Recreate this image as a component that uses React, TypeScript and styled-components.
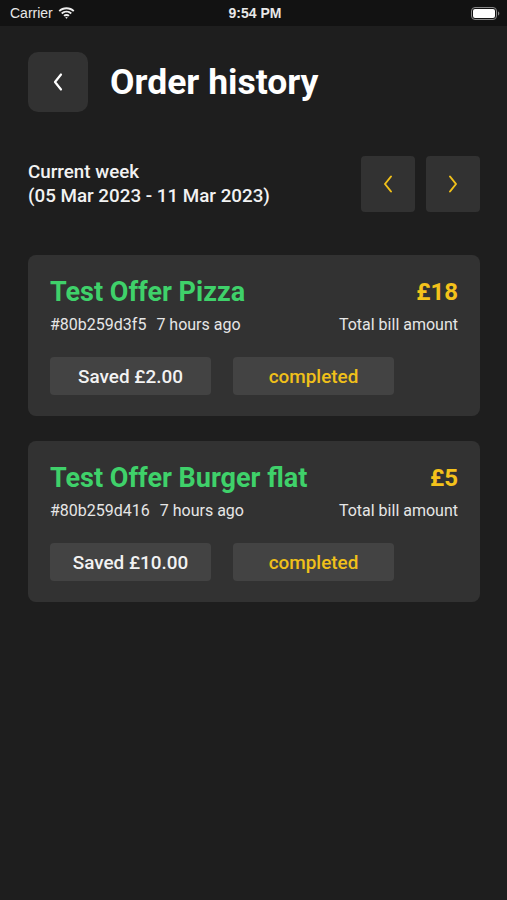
import React from 'react';
import styled, { createGlobalStyle } from 'styled-components';

const GlobalStyle = createGlobalStyle`
    html, body {
        margin: 0;
        padding: 0;
        background: #1e1e1e;
        font-family: Roboto, "Liberation Sans", sans-serif;
        color: #fff;
    }
`;

const Screen = styled.div`
    width: 507px;
    min-height: 900px;
    background: #1e1e1e;
    display: flex;
    flex-direction: column;
`;

const StatusBar = styled.div`
    height: 26px;
    background: #121212;
    display: grid;
    grid-template-columns: 1fr auto 1fr;
    align-items: center;
    padding: 0 7px 0 10px;
    font-family: "Liberation Sans", Arial, sans-serif;
    font-size: 14px;
    color: #e8e8e8;

    .left {
        display: flex;
        align-items: center;
        gap: 5px;
    }

    .time {
        font-weight: 600;
    }

    .right {
        display: flex;
        justify-content: flex-end;
    }
`;

const Content = styled.div`
    padding: 26px 27px 0 28px;
    display: flex;
    flex-direction: column;
`;

const Header = styled.div`
    display: flex;
    align-items: center;
    gap: 22px;
`;

const IconButton = styled.button<{ size: number; h?: number; radius?: number }>`
    width: ${(p) => p.size}px;
    height: ${(p) => p.h ?? p.size}px;
    border-radius: ${(p) => p.radius ?? 10}px;
    background: #323232;
    border: none;
    padding: 0;
    display: flex;
    align-items: center;
    justify-content: center;
    cursor: pointer;
`;

const Title = styled.h1`
    margin: 0;
    font-size: 35.5px;
    font-weight: 700;
    color: #fff;
`;

const WeekRow = styled.div`
    margin-top: 44px;
    display: flex;
    align-items: center;
    justify-content: space-between;
`;

const WeekText = styled.div`
    font-size: 18.8px;
    line-height: 24px;
    font-weight: 500;
    color: #f2f2f2;
`;

const NavGroup = styled.div`
    display: flex;
    gap: 11px;
`;

const CardList = styled.div`
    margin-top: 43px;
    display: flex;
    flex-direction: column;
    gap: 25px;
`;

const Card = styled.div`
    background: #323232;
    border-radius: 8px;
    padding: 22px 22px 21px;
    display: flex;
    flex-direction: column;
`;

const Row = styled.div`
    display: flex;
    align-items: center;
    justify-content: space-between;
`;

const OfferName = styled.div`
    font-size: 27px;
    line-height: 30px;
    font-weight: 700;
    color: #3fd16a;
`;

const Price = styled.div`
    font-size: 24px;
    line-height: 28px;
    font-weight: 700;
    color: #f4c21b;
`;

const Meta = styled(Row)`
    margin-top: 8px;
    font-size: 16px;
    line-height: 20px;
    color: #e6e6e6;

    span + span {
        margin-left: 10px;
    }
`;

const Actions = styled.div`
    margin-top: 22px;
    display: flex;
    gap: 22px;
`;

const Pill = styled.div<{ $accent?: boolean }>`
    width: 161px;
    height: 38px;
    border-radius: 4px;
    background: #434343;
    display: flex;
    align-items: center;
    justify-content: center;
    font-size: 18.9px;
    font-weight: 500;
    color: ${(p) => (p.$accent ? '#f0c01a' : '#f2f2f2')};
`;

const Chevron = ({ dir, color, w = 2 }: { dir: 'left' | 'right'; color: string; w?: number }) => (
    <svg width="12" height="20" viewBox="0 0 12 20" fill="none">
        <path
            d={dir === 'left' ? 'M9 2.5 L3 10 L9 17.5' : 'M3 2.5 L9 10 L3 17.5'}
            stroke={color}
            strokeWidth={w}
            strokeLinecap="round"
            strokeLinejoin="round"
        />
    </svg>
);

const orders = [
    { name: 'Test Offer Pizza', price: '£18', id: '#80b259d3f5', when: '7 hours ago', saved: 'Saved £2.00' },
    { name: 'Test Offer Burger flat', price: '£5', id: '#80b259d416', when: '7 hours ago', saved: 'Saved £10.00' },
];

export default function App() {
    return (
        <Screen>
            <GlobalStyle />
            <StatusBar>
                <div className="left">
                    <span>Carrier</span>
                    <svg width="17" height="12" viewBox="0 0 17 12">
                        <path d="M8.5 2.2c2.6 0 4.9 1 6.6 2.6l1.3-1.4C14.4 1.4 11.6.2 8.5.2S2.6 1.4.6 3.4l1.3 1.4C3.6 3.2 5.9 2.2 8.5 2.2z" fill="#eee" />
                        <path d="M8.5 5.6c1.6 0 3 .6 4.1 1.6l1.3-1.4C12.5 4.5 10.6 3.7 8.5 3.7S4.5 4.5 3.1 5.8l1.3 1.4c1.1-1 2.5-1.6 4.1-1.6z" fill="#eee" />
                        <path d="M8.5 8.9c.7 0 1.3.3 1.8.7l1.3-1.4c-.8-.8-1.9-1.2-3.1-1.2s-2.3.4-3.1 1.2l1.3 1.4c.5-.4 1.1-.7 1.8-.7zM8.5 11.8l1.3-1.4c-.4-.3-.8-.5-1.3-.5s-.9.2-1.3.5z" fill="#eee" />
                    </svg>
                </div>
                <span className="time">9:54 PM</span>
                <div className="right">
                    <svg width="29" height="13" viewBox="0 0 29 13">
                        <rect x="0.5" y="0.5" width="25" height="12" rx="3.5" fill="none" stroke="#888" />
                        <rect x="2" y="2" width="22" height="9" rx="2" fill="#fff" />
                        <path d="M27 4.5v4c.8-.3 1.3-1.1 1.3-2s-.5-1.7-1.3-2z" fill="#888" />
                    </svg>
                </div>
            </StatusBar>

            <Content>
                <Header>
                    <IconButton size={60} aria-label="Back">
                        <Chevron dir="left" color="#fff" w={2.2} />
                    </IconButton>
                    <Title>Order history</Title>
                </Header>

                <WeekRow>
                    <WeekText>
                        Current week
                        <br />
                        (05 Mar 2023 - 11 Mar 2023)
                    </WeekText>
                    <NavGroup>
                        <IconButton size={54} h={56} radius={4} aria-label="Previous week">
                            <Chevron dir="left" color="#f0c01a" />
                        </IconButton>
                        <IconButton size={54} h={56} radius={4} aria-label="Next week">
                            <Chevron dir="right" color="#f0c01a" />
                        </IconButton>
                    </NavGroup>
                </WeekRow>

                <CardList>
                    {orders.map((o) => (
                        <Card key={o.id}>
                            <Row>
                                <OfferName>{o.name}</OfferName>
                                <Price>{o.price}</Price>
                            </Row>
                            <Meta>
                                <div>
                                    <span>{o.id}</span>
                                    <span>{o.when}</span>
                                </div>
                                <div>Total bill amount</div>
                            </Meta>
                            <Actions>
                                <Pill>{o.saved}</Pill>
                                <Pill $accent>completed</Pill>
                            </Actions>
                        </Card>
                    ))}
                </CardList>
            </Content>
        </Screen>
    );
}
